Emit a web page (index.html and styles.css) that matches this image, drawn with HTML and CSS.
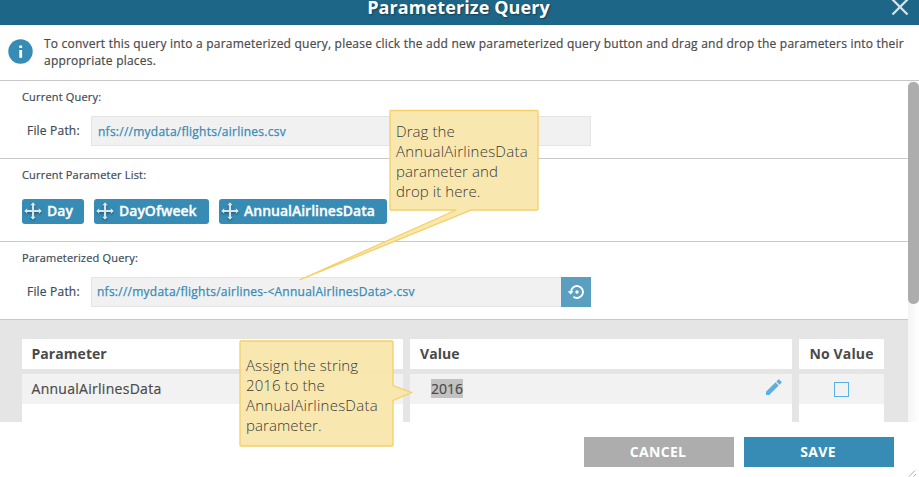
FILE: index.html
```html
<!DOCTYPE html>
<html lang="en">
<head>
<meta charset="utf-8">
<title>Parameterize Query</title>
<link rel="stylesheet" href="styles.css">
</head>
<body>
<svg class="defs" width="0" height="0" aria-hidden="true">
  <symbol id="move" viewBox="0 0 18 18">
    <path d="M9 1.8v14.4M1.8 9h14.4" stroke="currentColor" stroke-width="2.2" fill="none"/>
    <path d="M9 .2l2.7 3H6.3zM9 17.8l2.7-3H6.3zM.2 9l3-2.7v5.4zM17.8 9l-3-2.7v5.4z" fill="currentColor"/>
  </symbol>
</svg>
<div class="dialog">
  <header class="titlebar">
    <h1 class="title">Parameterize Query</h1>
    <svg class="close" width="18" height="18" viewBox="0 0 18 18"><path d="M1.500 1.500l15 15M16.500 1.500l-15 15" stroke="#d4e3ea" stroke-width="2.300"/></svg>
  </header>
  <div class="info">
    <svg class="info-icon" width="25" height="25" viewBox="0 0 25 25"><circle cx="12.500" cy="12.500" r="12.200" fill="#368cb4"/><path d="M11.300 6.500h2.800v2.500h-2.800zM11.300 11h2.800v7.800h-2.800z" fill="#fff"/></svg>
    <p class="info-text">To convert this query into a parameterized query, please click the add new parameterized query button and drag and drop the parameters into their appropriate places.</p>
  </div>
  <div class="body">
    <div class="content">
      <section class="section">
        <h2 class="label">Current Query:</h2>
        <div class="field"><span class="field-name">File Path:</span><div class="input"><span class="path">nfs:///mydata/flights/airlines.csv</span></div></div>
      </section>
      <section class="section section-params">
        <h2 class="label">Current Parameter List:</h2>
        <div class="chips">
          <div class="chip chip-day"><svg width="18" height="18"><use href="#move"/></svg><span>Day</span></div>
          <div class="chip chip-week"><svg width="18" height="18"><use href="#move"/></svg><span>DayOfweek</span></div>
          <div class="chip chip-data"><svg width="18" height="18"><use href="#move"/></svg><span>AnnualAirlinesData</span></div>
        </div>
      </section>
      <section class="section section-result">
        <h2 class="label">Parameterized Query:</h2>
        <div class="field"><span class="field-name">File Path:</span><div class="input input-result"><span class="path">nfs:///mydata/flights/airlines-&lt;AnnualAirlinesData&gt;.csv</span>
          <span class="reset"><svg width="18" height="16" viewBox="0 0 18 16"><path d="M4 8.300A6 6 0 1 1 6.300 12.700" fill="none" stroke="#fff" stroke-width="1.900"/><path d="M.6 7.200h6L3.700 10.600z" fill="#fff"/><circle cx="10" cy="8" r="1.700" fill="#fff"/></svg></span></div></div>
      </section>
      <div class="table">
        <div class="col col-param"><div class="th">Parameter</div><div class="td">AnnualAirlinesData</div></div>
        <div class="col col-value"><div class="th">Value</div><div class="td"><span class="selected">2016</span>
          <svg class="pencil" width="16" height="16" viewBox="0 0 16 16"><path d="M0 12.700L9.500 3.200l3.200 3.200L3.200 15.900H0zM10.300 2.400L12 .7q.7-.7 1.400 0l1.900 1.900q.7.700 0 1.400L13.500 5.700z" fill="#58b0e8"/></svg></div></div>
        <div class="col col-none"><div class="th">No Value</div><div class="td"><span class="checkbox"></span></div></div>
      </div>
    </div>
    <div class="scrollbar"><div class="thumb"></div></div>
  </div>
  <footer class="footer"><button class="btn cancel">CANCEL</button><button class="btn save">SAVE</button></footer>
  <svg class="grip" width="9" height="7" viewBox="0 0 9 7"><path d="M1 6.500L7 .5M5.500 6.500l2.500-2.500" stroke="#aaa"/></svg>
</div>

<svg class="callouts" width="919" height="477" viewBox="0 0 919 477">
  <path d="M391 110.500H537q1 0 1 1V209q0 1-1 1H471.500L299.500 280 456 210H391q-1 0-1-1V111.500q0-1 1-1z"/>
  <path d="M241 341H392q1 0 1 1V385.500L411.500 392.500 393 400.500V445q0 1-1 1H241q-1 0-1-1V342q0-1 1-1z"/>
</svg>
<div class="note note-drag">Drag the<br><span class="wide">AnnualAirlinesData</span><br>parameter and<br>drop it here.</div>
<div class="note note-assign">Assign the string<br>2016 to the<br><span class="wide">AnnualAirlinesData</span><br>parameter.</div>
</body>
</html>
```
FILE: styles.css
```css
* { box-sizing: border-box; }
body { margin: 0; width: 919px; height: 477px; overflow: hidden; background: #fff; font-family: "Open Sans", sans-serif; color: #4a4a4a; }
h1, h2, p { margin: 0; }
svg { display: block; flex: none; }
.defs { position: absolute; }
.dialog { position: relative; width: 919px; height: 477px; display: flex; flex-direction: column; }
.titlebar { height: 25px; flex: none; background: #1e6687; display: flex; align-items: flex-start; }
.title { flex: 1; padding-left: 16px; text-align: center; font-size: 18px; line-height: 15px; font-weight: 700; letter-spacing: .1px; color: #fff; text-shadow: 1px 1px 2px rgba(0,0,0,.4); }
.close { margin: -2px 10px 0 -10px; }
.info { height: 56px; flex: none; border-bottom: 1px solid #c8c8c8; display: flex; padding: 10px 8px; }
.info-icon { margin: 4px 11px 0 0; }
.info-text { flex: 1; font-size: 12px; line-height: 17px; letter-spacing: .215px; -webkit-text-stroke: .2px; }
.body { height: 341px; flex: none; display: flex; overflow: hidden; }
.content { width: 908px; }
.section { height: 78px; border-bottom: 1px solid #c8cac9; padding: 7px 22px 0; }
.section-params { height: 83px; }
.label { height: 17px; font-size: 11px; line-height: 18px; font-weight: 400; letter-spacing: .18px; color: #3d4b56; -webkit-text-stroke: .2px; }
.field { display: flex; margin-top: 11px; align-items: center; }
.field-name { width: 64px; padding-left: 5px; font-size: 12px; line-height: 28px; color: #3d4b56; margin-right: 5px; letter-spacing: .2px; white-space: nowrap; -webkit-text-stroke: .2px; }
.input { width: 500px; height: 30px; border: 1px solid #e4e4e4; background: #f1f1f1; padding-left: 6px; font-size: 12px; line-height: 29px; letter-spacing: .25px; color: #368cb4; display: flex; justify-content: space-between; -webkit-text-stroke: .25px; }
.input-result { padding-left: 5px; line-height: 27px; }
.reset { width: 30px; height: 30px; margin: -1px -1px 0 0; background: #5b9fc0; display: grid; place-items: center; }
.chips { display: flex; gap: 10px; margin-top: 16px; }
.chip { height: 25px; border-radius: 3px; background: #368cb4; color: #fff; display: flex; align-items: center; padding-left: 3px; gap: 4px; font-size: 14px; line-height: 23px; font-weight: 600; white-space: nowrap; -webkit-text-stroke: .3px; }
.chip span { margin-top: -2px; }
.chip svg { margin-left: -1px; margin-right: 1px; margin-top: -2px; color: #d6e6ed; filter: drop-shadow(0 1px 1px rgba(0,0,0,.45)); }
.chip-day { width: 62px; }
.chip-week { width: 115px; }
.chip-data { width: 168px; }
.table { height: 102px; background: #e5e5e5; padding: 19px 24px 0 22px; display: flex; gap: 7px; }
.col { height: 83px; background: #fff; }
.col-param { width: 381px; }
.col-value { width: 382px; }
.col-none { width: 85px; }
.th { height: 30px; padding-left: 10px; font-size: 14px; line-height: 30px; font-weight: 700; letter-spacing: .05px; white-space: nowrap; }
.td { height: 35px; border-top: 5px solid #e5e5e5; background: #f2f2f2; padding-left: 10px; font-size: 14px; line-height: 30px; display: flex; align-items: center; -webkit-text-stroke: .2px; }
.col-param .th, .col-param .td { padding-left: 9.5px; }
.col-param .th { letter-spacing: .05px; }
.col-param .td { letter-spacing: .28px; }
.col-value .td { padding: 0 10px 0 21px; justify-content: space-between; }
.selected { background: #c2c2c2; line-height: 19px; margin-top: -1px; }
.pencil { margin-top: -4px; }
.col-none .th { padding: 0; text-align: center; letter-spacing: .15px; }
.col-none .td { padding: 1px 0 0; justify-content: center; }
.checkbox { width: 15px; height: 15px; border: 1px solid #58b0e8; }
.scrollbar { width: 11px; background: linear-gradient(90deg, #f4f4f4, #fff); padding-top: 1px; }
.thumb { height: 222px; border-radius: 5px; background: #adadad; }
.footer { height: 55px; display: flex; justify-content: flex-end; gap: 10px; padding: 15px 25px 0 0; }
.btn { width: 150px; height: 30px; border: 0; padding: 0 2px 0 0; color: #fff; font: 700 14px/30px "Open Sans", sans-serif; letter-spacing: .35px; }
.cancel { background: #adadad; }
.save { background: #368cb4; }
.grip { position: absolute; right: 2px; bottom: 0; }
.callouts { position: absolute; left: 0; top: 0; }
.callouts path { fill: #f8e6ab; fill-opacity: .96; stroke: #f4d067; stroke-width: 1.3; }
.note { position: absolute; font-size: 15px; line-height: 20px; font-weight: 300; color: #3a3a3a; white-space: nowrap; }
.note-drag { left: 396px; top: 121px; letter-spacing: .08px; }
.note-assign { left: 246px; top: 355px; letter-spacing: .08px; }
.wide { letter-spacing: .24px; }
```
